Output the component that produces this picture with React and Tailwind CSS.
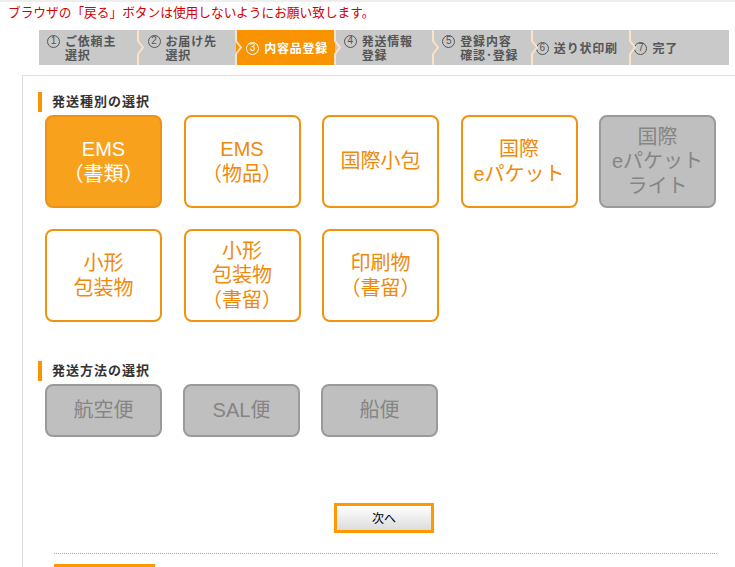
import React from 'react';

const steps = [
  { n: '1', lines: ['ご依頼主', '選択'], pad: 'pl-[8px]' },
  { n: '2', lines: ['お届け先', '選択'], pad: 'pl-[10px]' },
  { n: '3', lines: ['内容品登録'], pad: 'pl-[10px]', active: true },
  { n: '4', lines: ['発送情報', '登録'], pad: 'pl-[9px]' },
  { n: '5', lines: ['登録内容', '確認･登録'], pad: 'pl-[9px]' },
  { n: '6', lines: ['送り状印刷'], pad: 'pl-[4px]' },
  { n: '7', lines: ['完了'], pad: 'pl-[4px]' },
];

const kinds = [
  { lines: ['EMS', '（書類）'], state: 'on' },
  { lines: ['EMS', '（物品）'], state: 'off' },
  { lines: ['国際小包'], state: 'off' },
  { lines: ['国際', 'eパケット'], state: 'off' },
  { lines: ['国際', 'eパケット', 'ライト'], state: 'dis' },
  { lines: ['小形', '包装物'], state: 'off' },
  { lines: ['小形', '包装物', '（書留）'], state: 'off' },
  { lines: ['印刷物', '（書留）'], state: 'off' },
];

const methods = ['航空便', 'SAL便', '船便'];

const btnStyle = {
  on: 'bg-[#f8a11c] border-[#ef920f] text-white',
  off: 'bg-white border-[#f0930f] text-[#ee8a0a]',
  dis: 'bg-[#bfbfbf] border-[#9a9a9a] text-[#858585]',
};

function Sep() {
  return (
    <svg className="absolute left-[-2px] top-0" width="9" height="35" viewBox="0 0 9 35">
      <polyline points="2,0 2,11 7,17.5 2,24 2,35" fill="none" stroke="#fde2c3" strokeWidth="2" />
    </svg>
  );
}

function Heading({ children }) {
  return (
    <div className="ml-[15px] flex h-[20px] items-center">
      <div className="h-[20px] w-[4px] bg-[#f79400]" />
      <div className="ml-[10px] text-[13px] font-bold tracking-[1px] text-[#333]">{children}</div>
    </div>
  );
}

function Tile({ lines, state, tall }) {
  return (
    <div
      className={`flex ${tall ? 'h-[93px]' : 'h-[53px]'} w-[117px] flex-col items-center justify-center rounded-[8px] border-2 text-[20px] leading-[24.5px] ${btnStyle[state]}`}
    >
      {lines.map((l) => (
        <div key={l} className="whitespace-nowrap">{l}</div>
      ))}
    </div>
  );
}

export default function App() {
  return (
    <div
      className="h-[567px] w-[735px] overflow-hidden border-t-2 border-[#eeeeee] bg-white"
      style={{ fontFamily: '"Liberation Sans", "Noto Sans CJK JP", sans-serif' }}
    >
      <div className="pl-[8px] pt-[1px] text-[12.7px] leading-[18px] text-[#d40000]" style={{ fontFamily: '"Noto Sans CJK JP", sans-serif' }}>
        ブラウザの「戻る」ボタンは使用しないようにお願い致します。
      </div>

      <div
        className="ml-[39px] mt-[9px] grid h-[35px] w-[690px] grid-cols-[repeat(7,minmax(0,1fr))] bg-[#c9c9c9] text-[12px] font-bold leading-[14px] tracking-[0.8px]"
        style={{ fontFamily: '"Noto Sans CJK JP", sans-serif' }}
      >
        {steps.map((s, i) => (
          <div
            key={s.n}
            className={`relative flex items-center overflow-visible ${s.pad} ${s.active ? 'bg-[#f99400] text-white' : 'text-[#555]'}`}
          >
            {i > 0 && <Sep />}
            <div className="flex items-start">
              <span className="mr-[5px] mt-[1px] flex h-[13px] w-[13px] shrink-0 items-center justify-center rounded-full border border-current font-['Liberation_Sans'] text-[10px] font-normal leading-none tracking-normal">
                {s.n}
              </span>
              <div className="flex flex-col">
                {s.lines.map((l) => (
                  <span key={l} className="whitespace-nowrap">{l}</span>
                ))}
              </div>
            </div>
          </div>
        ))}
      </div>

      <div className="ml-[22px] mt-[10px] h-[600px] border-l border-t border-[#dddddd] pt-[16px]">
        <Heading>発送種別の選択</Heading>
        <div className="ml-[22px] mt-[3px] grid grid-cols-[repeat(5,117px)] gap-x-[21.5px] gap-y-[21px]">
          {kinds.map((k, i) => (
            <Tile key={i} lines={k.lines} state={k.state} tall />
          ))}
        </div>

        <div className="mt-[39px]">
          <Heading>発送方法の選択</Heading>
        </div>
        <div className="ml-[22px] mt-[3px] flex gap-x-[21px]">
          {methods.map((m) => (
            <Tile key={m} lines={[m]} state="dis" />
          ))}
        </div>

        <div className="ml-[311px] mt-[66px]">
          <button className="flex h-[30px] w-[100px] items-center justify-center border-[3px] border-[#ff9900] bg-gradient-to-b from-white to-[#dcdcdc] text-[12px] text-black" style={{ fontFamily: '"Noto Sans CJK JP", sans-serif' }}>
            次へ
          </button>
        </div>

        <div className="ml-[31px] mt-[20px] w-[663px] border-t border-dotted border-[#aaaaaa]" />
        <div className="ml-[31px] mt-[10px] h-[4px] w-[101px] bg-[#ff9900]" />
      </div>
    </div>
  );
}
